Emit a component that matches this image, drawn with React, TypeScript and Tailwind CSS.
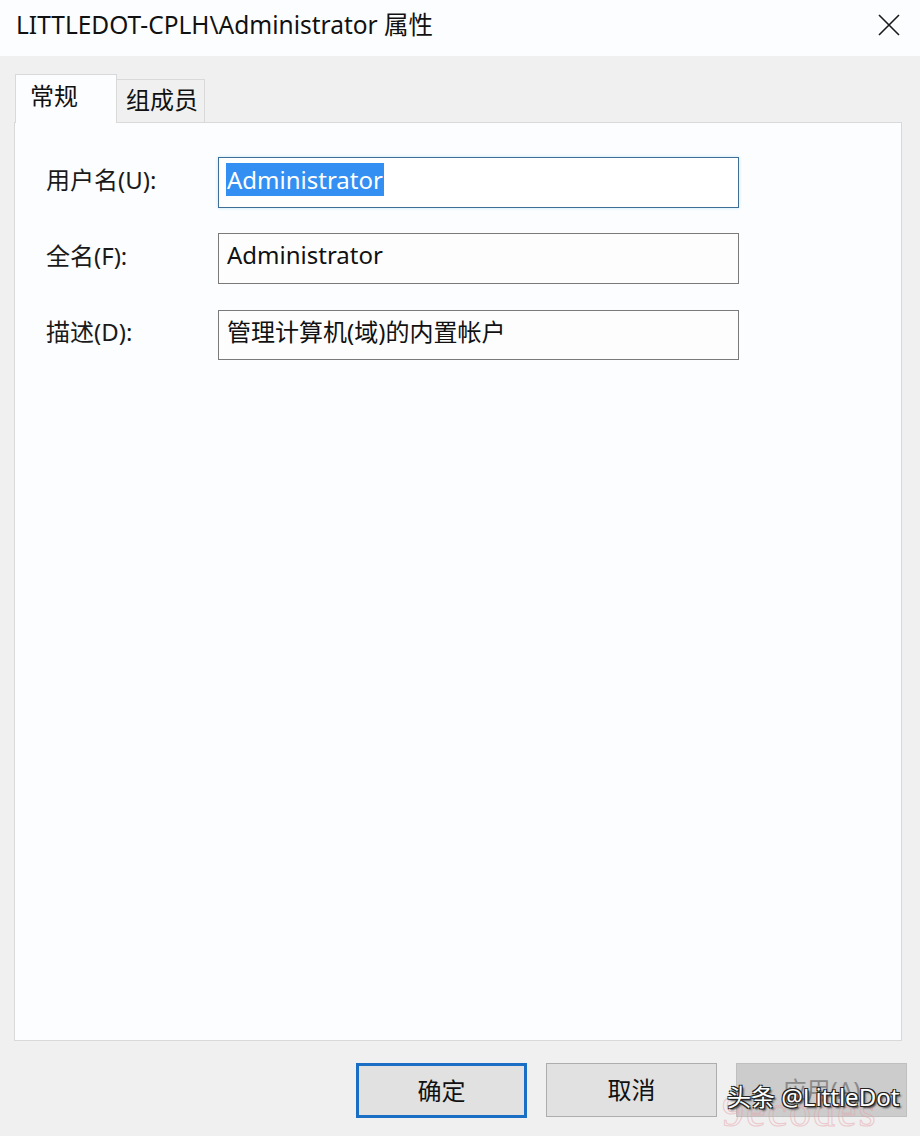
import React from "react";

const FONT = '"Noto Sans", "Noto Sans CJK SC", sans-serif';

function Row({ label, children, mt }: { label: string; children: React.ReactNode; mt: string }) {
  return (
    <div className={`flex items-center ${mt}`}>
      <div className="w-[172px] text-[24px] text-[#1a1a1a] leading-none pb-[6px]">{label}</div>
      {children}
    </div>
  );
}

export default function App() {
  return (
    <div
      className="w-[920px] h-[1136px] bg-[#f0f0f0] flex flex-col overflow-hidden relative"
      style={{ fontFamily: FONT }}
    >
      {/* Title bar */}
      <div className="h-[56px] bg-[#fcfdfe] flex items-center justify-between pl-[16px] pr-[19px] shrink-0">
        <div className="text-[24.5px] text-[#111] leading-none pb-[6px]">LITTLEDOT-CPLH\Administrator 属性</div>
        <svg width="24" height="24" viewBox="0 0 24 24" className="mb-[6px]">
          <path d="M2 2 L22 22 M22 2 L2 22" stroke="#1a1a1a" strokeWidth="1.6" />
        </svg>
      </div>

      {/* Tabs */}
      <div className="flex items-end pl-[15px] pt-[18px] shrink-0">
        <div className="w-[102px] h-[49px] bg-[#fcfdfe] border border-b-0 border-[#d9d9d9] -mb-px relative z-10 flex items-start pl-[14px] pt-[9px] text-[24px] text-[#111] leading-none">
          常规
        </div>
        <div className="w-[88px] h-[43px] bg-[#f0f0f0] border border-l-0 border-b-0 border-[#d9d9d9] flex items-start pl-[9px] pt-[8px] text-[24px] text-[#111] leading-none">
          组成员
        </div>
      </div>

      {/* Panel */}
      <div className="ml-[14px] w-[888px] h-[919px] bg-[#fcfdfe] border border-[#d9d9d9] shrink-0 pl-[31px] pt-[34px]">
        <Row label="用户名(U):" mt="mt-0">
          <div className="w-[521px] h-[51px] border border-[#3f6f96] bg-white shadow-[0_0_3px_#bfe6f7] flex items-center pl-[7px] pb-[6px]">
            <span className="bg-[#3390f2] text-white text-[24px] leading-[33px] px-[1px]">Administrator</span>
          </div>
        </Row>
        <Row label="全名(F):" mt="mt-[25px]">
          <div className="w-[521px] h-[51px] border border-[#7a7a7a] bg-[#fdfdfd] flex items-center pl-[8px] pb-[7px] text-[24px] text-[#111]">
            Administrator
          </div>
        </Row>
        <Row label="描述(D):" mt="mt-[26px]">
          <div className="w-[521px] h-[50px] border border-[#7a7a7a] bg-[#fdfdfd] flex items-center pl-[8px] pb-[6px] text-[24px] text-[#111]">
            管理计算机(域)的内置帐户
          </div>
        </Row>
      </div>

      {/* Buttons */}
      <div className="flex pl-[356px] pt-[22px] gap-[19px] shrink-0">
        <div className="w-[171px] h-[55px] border-[3px] border-[#1a6fc4] bg-[#e1e1e1] flex items-center justify-center text-[24px] text-[#111]">
          确定
        </div>
        <div className="w-[171px] h-[54px] border border-[#adadad] bg-[#e1e1e1] flex items-center justify-center text-[24px] text-[#111]">
          取消
        </div>
        <div className="w-[171px] h-[54px] border border-[#bfbfbf] bg-[#cccccc] flex items-center justify-center text-[24px] text-[#8a8a8a]">
          应用(A)
        </div>
      </div>

      {/* Watermarks */}
      <div
        className="absolute left-[722px] top-[1090px] text-[44px] leading-none text-transparent tracking-[2px] opacity-50"
        style={{ WebkitTextStroke: "1px #e8a0a8", fontFamily: '"Liberation Serif", serif' }}
      >
        9ecodes
      </div>
      <div
        className="absolute left-[727px] top-[1085px] text-[24px] leading-none text-white"
        style={{ textShadow: "1px 1px 0 #222, -1px -1px 0 #222, 1px -1px 0 #222, -1px 1px 0 #222, 2px 2px 2px #333" }}
      >
        头条 @LittleDot
      </div>
    </div>
  );
}
